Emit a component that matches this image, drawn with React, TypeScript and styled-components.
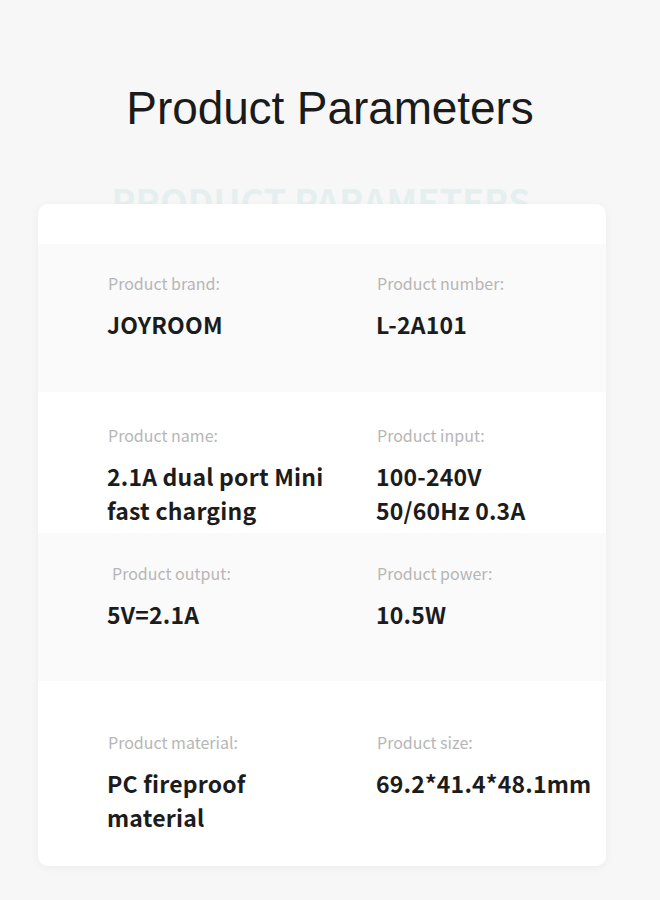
import React from 'react';
import styled, { createGlobalStyle } from 'styled-components';

const GlobalStyle = createGlobalStyle`
  html, body {
    margin: 0;
    padding: 0;
    background: #f7f7f7;
  }
`;

const Page = styled.div`
  width: 660px;
  height: 900px;
  background: #f7f7f7;
  display: flex;
  flex-direction: column;
  align-items: center;
  overflow: hidden;
`;

const Title = styled.h1`
  margin: 79px 0 0;
  font-family: 'Liberation Sans', Arial, sans-serif;
  font-weight: 400;
  font-size: 46px;
  line-height: 58px;
  color: #1b1b1b;
  letter-spacing: -0.1px;
`;

// faint heading that sits behind the top edge of the card
const Watermark = styled.div`
  margin: 44px 0 -15px -18px;
  font-family: 'Noto Sans CJK SC', 'Noto Sans', sans-serif;
  font-weight: 700;
  font-size: 36px;
  line-height: 38px;
  color: #e6eff0;
  position: relative;
  z-index: 0;
`;

const Card = styled.div`
  position: relative;
  z-index: 1;
  width: 568px;
  margin-left: -16px;
  background: #ffffff;
  border-radius: 10px;
  box-shadow: 0 2px 8px rgba(0, 0, 0, 0.05);
  overflow: hidden;
  padding-top: 40px;
`;

interface RowProps {
  $shade: boolean;
  $height: number;
  $top: number;
}

const Row = styled.div<RowProps>`
  display: grid;
  grid-template-columns: 269px 1fr;
  height: ${(p) => p.$height}px;
  padding: ${(p) => p.$top}px 0 0 70px;
  box-sizing: border-box;
  background: ${(p) => (p.$shade ? '#fafafa' : '#ffffff')};
`;

const Cell = styled.div`
  display: flex;
  flex-direction: column;
`;

const Label = styled.div<{ $shift?: number }>`
  padding-left: ${(p) => p.$shift || 0}px;
  font-family: 'Noto Sans CJK SC', 'Noto Sans', sans-serif;
  font-weight: 400;
  font-size: 16px;
  line-height: 20px;
  color: #b6b6b6;
`;

const Value = styled.div`
  margin-top: 14px;
  margin-left: -1px;
  font-family: 'Noto Sans CJK SC', 'Noto Sans', sans-serif;
  font-weight: 700;
  font-size: 23px;
  line-height: 34px;
  letter-spacing: 0.2px;
  color: #1c1c1c;
  white-space: pre-line;
`;

const rows = [
  {
    shade: true,
    height: 148,
    top: 29,
    cells: [
      { label: 'Product brand:', value: 'JOYROOM' },
      { label: 'Product number:', value: 'L-2A101' },
    ],
  },
  {
    shade: false,
    height: 141,
    top: 33,
    cells: [
      { label: 'Product name:', value: '2.1A dual port Mini\nfast charging' },
      { label: 'Product input:', value: '100-240V\n50/60Hz 0.3A' },
    ],
  },
  {
    shade: true,
    height: 148,
    top: 30,
    cells: [
      { label: 'Product output:', value: '5V=2.1A', shift: 4 },
      { label: 'Product power:', value: '10.5W' },
    ],
  },
  {
    shade: false,
    height: 185,
    top: 51,
    cells: [
      { label: 'Product material:', value: 'PC fireproof\nmaterial' },
      { label: 'Product size:', value: '69.2*41.4*48.1mm' },
    ],
  },
];

export default function App() {
  return (
    <Page>
      <GlobalStyle />
      <Title>Product Parameters</Title>
      <Watermark>PRODUCT PARAMETERS</Watermark>
      <Card>
        {rows.map((row, i) => (
          <Row key={i} $shade={row.shade} $height={row.height} $top={row.top}>
            {row.cells.map((c) => (
              <Cell key={c.label}>
                <Label $shift={c.shift}>{c.label}</Label>
                <Value>{c.value}</Value>
              </Cell>
            ))}
          </Row>
        ))}
      </Card>
    </Page>
  );
}
